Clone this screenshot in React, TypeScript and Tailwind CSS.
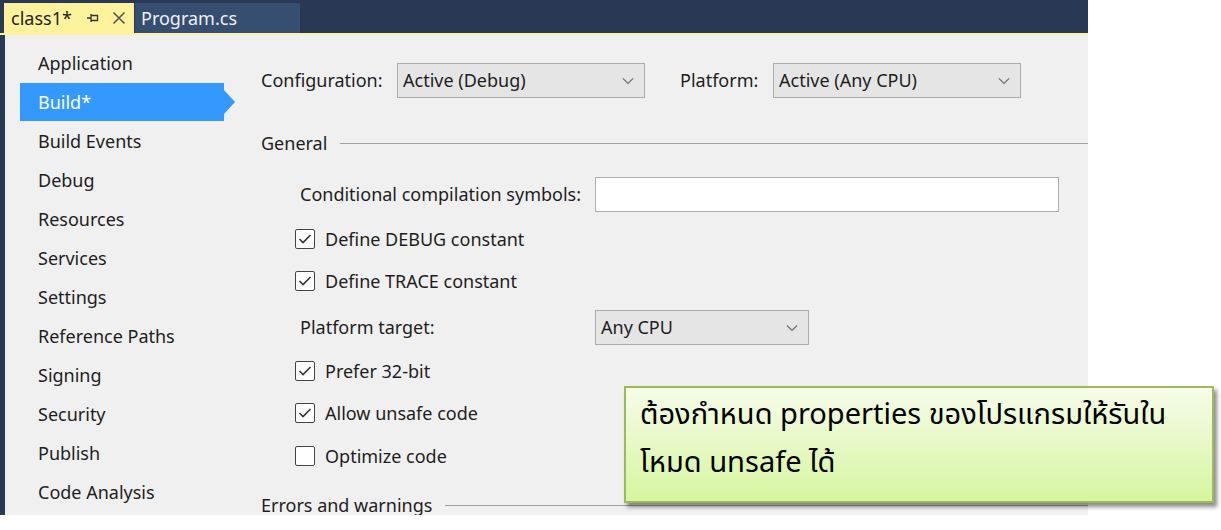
import React from "react";

const font = { fontFamily: '"Noto Sans", "Open Sans", sans-serif' };

const navItems = [
    "Application",
    "Build*",
    "Build Events",
    "Debug",
    "Resources",
    "Services",
    "Settings",
    "Reference Paths",
    "Signing",
    "Security",
    "Publish",
    "Code Analysis",
];

function Chevron() {
    return (
        <svg width="12" height="8" viewBox="0 0 12 8" className="text-[#707070]">
            <path d="M1 1.5 L6 6.5 L11 1.5" fill="none" stroke="currentColor" strokeWidth="1.2" />
        </svg>
    );
}

function Select({ value, width }: { value: string; width: string }) {
    return (
        <div className={`${width} h-[35px] bg-[#e5e5e5] border border-[#acacac] flex items-center justify-between pl-[5px] pr-[10px]`}>
            <span>{value}</span>
            <Chevron />
        </div>
    );
}

function CheckRow({ label, checked, mt }: { label: string; checked: boolean; mt: string }) {
    return (
        <div className={`${mt} h-[24px] flex items-center pl-[37px] gap-[10px]`}>
            <div className="w-[20px] h-[20px] border border-[#444] bg-white flex items-center justify-center rounded-[2px]">
                {checked && (
                    <svg width="14" height="12" viewBox="0 0 14 12">
                        <path d="M1.5 6 L5 9.5 L12.5 2" fill="none" stroke="#333" strokeWidth="1.6" />
                    </svg>
                )}
            </div>
            <span>{label}</span>
        </div>
    );
}

function SectionHeader({ title, mt }: { title: string; mt: string }) {
    return (
        <div className={`${mt} h-[30px] flex items-center pl-[3px] gap-[13px]`}>
            <span className="whitespace-nowrap">{title}</span>
            <div className="flex-1 h-px bg-[#a0a0a0]" />
        </div>
    );
}

export default function App() {
    return (
        <div className="w-[1221px] h-[530px] bg-white relative overflow-hidden text-[18px] text-[#1e1e1e]" style={font}>
            <div className="w-[1088px] h-[515px] flex flex-col">
                {/* document tabs */}
                <div className="h-[33px] bg-[#293955] flex items-end pl-[4px] shrink-0">
                    <div className="h-[30px] w-[130px] bg-[#fff29d] flex items-center pl-[7px] text-[18px] text-[#1e1e1e]">
                        <span>class1*</span>
                        <svg width="14" height="12" viewBox="0 0 14 12" className="ml-[14px]">
                            <path d="M1 6 H5 M5 2 V10 M5 3.5 H11.5 V8.5 H5" fill="none" stroke="#333" strokeWidth="1.3" />
                        </svg>
                        <svg width="14" height="14" viewBox="0 0 14 14" className="ml-[12px]">
                            <path d="M1.5 1.5 L12.5 12.5 M12.5 1.5 L1.5 12.5" fill="none" stroke="#555" strokeWidth="1.6" />
                        </svg>
                    </div>
                    <div className="h-[30px] w-[165px] ml-[1px] bg-[#364e6f] flex items-center pl-[6px] text-[18px] text-[#eef0f4]">
                        Program.cs
                    </div>
                </div>
                <div className="h-[2px] bg-[#fff29d] shrink-0" />

                {/* property pages */}
                <div className="flex-1 flex bg-[#f0f0f0] border-l-[5px] border-[#293955] overflow-hidden">
                    <div className="w-[253px] shrink-0 pt-[9px] pl-[15px]">
                        {navItems.map((item) => {
                            const active = item === "Build*";
                            return (
                                <div key={item} className="relative h-[39px] w-[204px] flex items-center">
                                    {active && (
                                        <>
                                            <div className="absolute left-0 top-0 w-[204px] h-[38px] bg-[#3399ff]" />
                                            <div className="absolute left-[204px] top-[7px] w-0 h-0 border-y-[12px] border-y-transparent border-l-[11px] border-l-[#3399ff]" />
                                        </>
                                    )}
                                    <span className={`relative pl-[18px] ${active ? "text-white -mt-[1px]" : ""}`}>{item}</span>
                                </div>
                            );
                        })}
                    </div>

                    <div className="flex-1 flex flex-col">
                        <div className="mt-[28px] h-[35px] flex items-center pl-[3px]">
                            <span className="w-[136px]">Configuration:</span>
                            <Select value="Active (Debug)" width="w-[248px]" />
                            <span className="ml-[35px] w-[93px]">Platform:</span>
                            <Select value="Active (Any CPU)" width="w-[248px]" />
                        </div>
                        <div className="mt-[23px] h-[2px] bg-[#b0b0b0]" />

                        <SectionHeader title="General" mt="mt-[9px]" />

                        <div className="mt-[20px] h-[35px] flex items-center pl-[42px]">
                            <span className="w-[295px]">Conditional compilation symbols:</span>
                            <div className="w-[464px] h-[35px] bg-white border border-[#acacac]" />
                        </div>

                        <CheckRow label="Define DEBUG constant" checked mt="mt-[15px]" />
                        <CheckRow label="Define TRACE constant" checked mt="mt-[18px]" />

                        <div className="mt-[17px] h-[35px] flex items-center pl-[42px]">
                            <span className="w-[295px]">Platform target:</span>
                            <Select value="Any CPU" width="w-[214px]" />
                        </div>

                        <CheckRow label="Prefer 32-bit" checked mt="mt-[14px]" />
                        <CheckRow label="Allow unsafe code" checked mt="mt-[18px]" />
                        <CheckRow label="Optimize code" checked={false} mt="mt-[19px]" />

                        <SectionHeader title="Errors and warnings" mt="mt-[24px]" />
                    </div>
                </div>
            </div>

            {/* callout note */}
            <div
                className="absolute left-[624px] top-[386px] w-[590px] h-[117px] border-2 border-[#9bbb59] bg-gradient-to-b from-[#f6fce9] to-[#d6f59e] shadow-[3px_4px_4px_rgba(0,0,0,0.45)] pl-[14px] pt-[3px] text-[29px] leading-[48px] text-black whitespace-nowrap"
                style={{ fontFamily: '"Noto Sans Thai", "Noto Sans", "Open Sans", sans-serif' }}
            >
                <div>ต้องกำหนด properties ของโปรแกรมให้รันใน</div>
                <div>โหมด unsafe ได้</div>
            </div>
        </div>
    );
}
